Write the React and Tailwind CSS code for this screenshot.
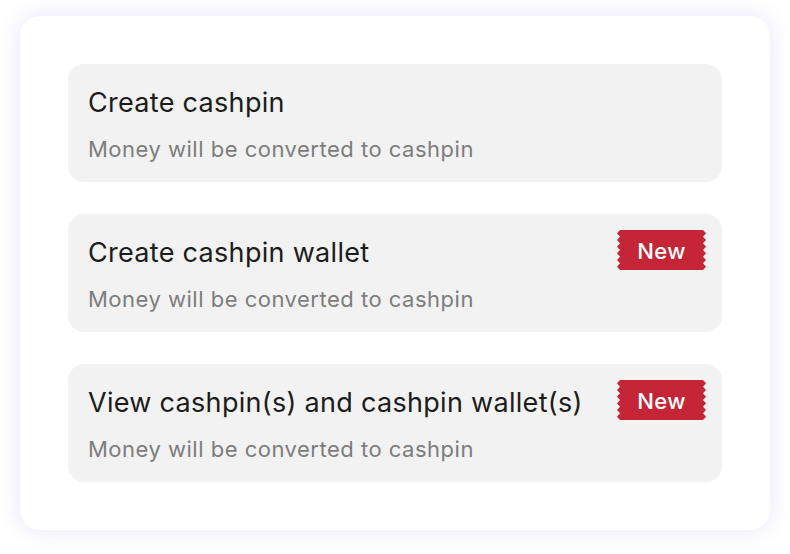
import React from "react";

function Badge() {
  return (
    <div className="relative flex h-[40px] w-[89px] shrink-0 items-center justify-center">
      <svg className="absolute inset-0" width="89" height="40" viewBox="0 0 89 40" preserveAspectRatio="none">
        <path
          d="M3 0 H86 L89 3.33 L86 6.67 L89 10 L86 13.33 L89 16.67 L86 20 L89 23.33 L86 26.67 L89 30 L86 33.33 L89 36.67 L86 40 H3 L0 36.67 L3 33.33 L0 30 L3 26.67 L0 23.33 L3 20 L0 16.67 L3 13.33 L0 10 L3 6.67 L0 3.33 Z"
          fill="#c42638"
        />
      </svg>
      <span className="relative pt-[2px] text-[22px] font-medium leading-none tracking-[0.3px] text-white">New</span>
    </div>
  );
}

function Item({ title, badge }) {
  return (
    <div className="flex h-[118px] items-start justify-between rounded-[16px] bg-[#f2f2f2] pl-[20px] pr-[16px]">
      <div className="flex flex-col pt-[22px]">
        <div className="text-[27px] leading-[34px] tracking-[0.3px] text-[#1c1c1c]">{title}</div>
        <div className="mt-[15px] text-[22px] leading-[28px] tracking-[0.5px] text-[#7d7d7d]">Money will be converted to cashpin</div>
      </div>
      {badge && <div className="pt-[16px]"><Badge /></div>}
    </div>
  );
}

export default function App() {
  return (
    <div className="flex h-[554px] w-[790px] items-start justify-center bg-white pt-[16px]" style={{ fontFamily: "Inter, 'Noto Sans', sans-serif" }}>
      <div className="flex w-[750px] flex-col gap-[32px] rounded-[20px] bg-white p-[48px] shadow-[0_0_22px_rgba(110,90,230,0.16)]">
        <Item title="Create cashpin" />
        <Item title="Create cashpin wallet" badge />
        <Item title="View cashpin(s) and cashpin wallet(s)" badge />
      </div>
    </div>
  );
}
